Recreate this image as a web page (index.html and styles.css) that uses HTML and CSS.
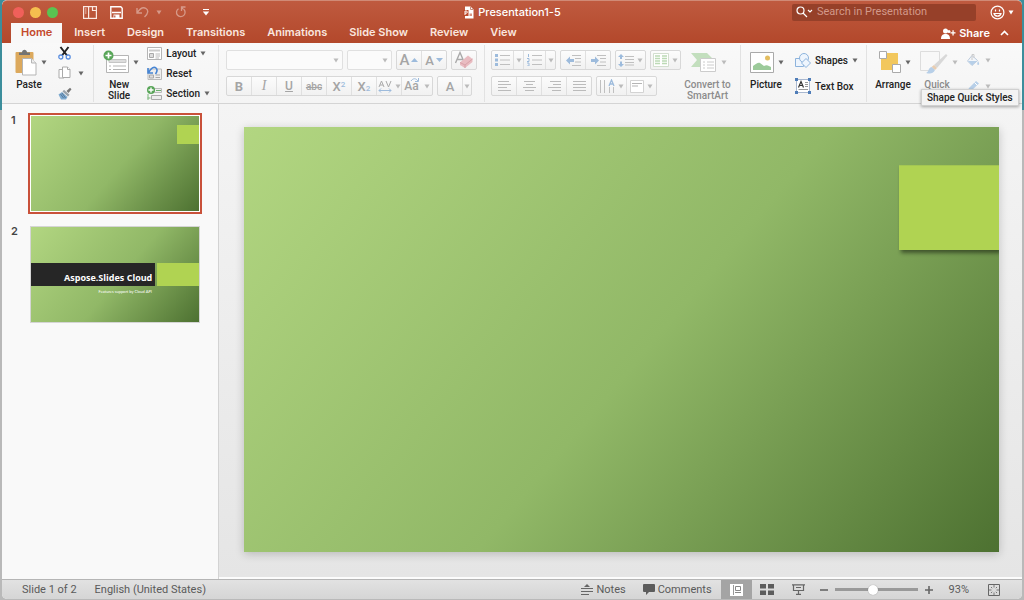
FILE: index.html
```html
<!DOCTYPE html>
<html lang="en">
<head>
<meta charset="utf-8">
<meta name="viewport" content="width=device-width, initial-scale=1">
<title>Presentation1-5</title>
<link rel="stylesheet" href="styles.css">
</head>
<body>
<svg class="defs" aria-hidden="true">
  <symbol id="caret" viewBox="0 0 6 5"><path d="M.5 .5h5L3 4.5z"/></symbol>
</svg>
<div class="window">
  <header class="header">
    <div class="titlebar">
      <div class="title-left">
        <div class="lights">
          <button class="light red" aria-label="Close"></button>
          <button class="light amber" aria-label="Minimise"></button>
          <button class="light green" aria-label="Zoom"></button>
        </div>
        <div class="quick">
          <button class="qbtn" aria-label="File gallery"><svg width="14" height="13" viewBox="0 0 14 13"><rect x=".6" y=".6" width="12.800" height="11.800" fill="none" stroke="#fbe9e3" stroke-width="1.200"/><path d="M2 3h1.500M2 5h1.500M2 7h1.500" stroke="#f0cfc5"/><path d="M5.600 1v11" stroke="#fbe9e3" stroke-width="1.200"/><path d="M9.500 1v3.500H13" fill="none" stroke="#fbe9e3" stroke-width="1.200"/></svg></button>
          <button class="qbtn" aria-label="Save"><svg width="13" height="13" viewBox="0 0 13 13"><path d="M.8.8h10l1.400 1.400v10H.8z" fill="none" stroke="#fff" stroke-width="1.400"/><path d="M2 6.500h9" stroke="#fff" stroke-width="1.400"/><path d="M3.500 8.500h6V12h-6z" fill="#fff"/><path d="M4.800 9.500v2" stroke="#b9503a" stroke-width="1.200"/></svg></button>
          <button class="qbtn wide faded" aria-label="Undo"><svg width="14" height="12" viewBox="0 0 14 12" fill="none" stroke="#fff" stroke-width="1.400"><path d="M1 2v5h5M1.300 6.700C4 2.500 7.500 1 10 2.500s2.500 5-1.500 8.500"/></svg><svg class="caret light-caret"><use href="#caret"/></svg></button>
          <button class="qbtn faded" aria-label="Repeat"><svg width="12" height="12" viewBox="0 0 12 12" fill="none" stroke="#fff" stroke-width="1.300"><path d="M10.500 1H6.500v4M6.500 1.500 8 3M8.500 3a4.300 4.300 0 1 1-5-.3"/></svg></button>
          <button class="qbtn" aria-label="Customise toolbar"><svg width="8" height="7" viewBox="0 0 8 7"><path d="M1 .5h6" stroke="#fff"/><path d="M.8 2.500h6.400L4 6.500z" fill="#fff"/></svg></button>
        </div>
      </div>
      <h1 class="doc-title"><svg width="11" height="13" viewBox="0 0 11 13"><path d="M2 .5h5.500l3 3v9H2z" fill="#fff"/><path d="M7.500.5v3h3" fill="none" stroke="#c9907f"/><path d="M0 4h5.500v6H0z" fill="#bd4a2d"/><path d="M2 9V5h1.200a1 1 0 0 1 0 2.200H2" fill="none" stroke="#fff"/><path d="M6.500 7.500h2.500v2.500h-2.500z" fill="#d89482"/></svg>Presentation1-5</h1>
      <div class="title-right">
        <label class="search"><svg width="17" height="12" viewBox="0 0 17 12" fill="none" stroke="#fff" stroke-width="1.200"><circle cx="4.500" cy="4.500" r="3.500"/><path d="m7 7 4 4M12 4l2 2 2-2"/></svg><input type="text" aria-label="Search in Presentation" placeholder="Search in Presentation"></label>
        <button class="smile" aria-label="Feedback"><svg width="15" height="15" viewBox="0 0 15 15" fill="none" stroke="#fff" stroke-width="1.200"><circle cx="7.500" cy="7.500" r="6.400"/><path d="M4 8.500c.8 3.500 6.200 3.500 7 0z"/><path d="M5.500 4.500v2M9.500 4.500v2"/></svg><svg class="caret light-caret"><use href="#caret"/></svg></button>
      </div>
    </div>
    <div class="tabbar">
      <nav class="tabs">
        <a class="tab active" href="#home">Home</a><a class="tab" href="#insert">Insert</a><a class="tab" href="#design">Design</a><a class="tab" href="#transitions">Transitions</a><a class="tab" href="#animations">Animations</a><a class="tab" href="#slideshow">Slide Show</a><a class="tab" href="#review">Review</a><a class="tab" href="#view">View</a>
      </nav>
      <button class="share"><svg width="15" height="11" viewBox="0 0 15 11" fill="#fff"><circle cx="4.500" cy="3" r="2.500"/><path d="M0 11c0-4 2-5 4.500-5s4.500 1 4.500 5z"/><circle cx="8" cy="3.500" r="1.500"/><path d="M9.500 4.200h5v1.300h-5z"/><path d="M11.400 2.200h1.300v5.200h-1.300z"/></svg>Share</button>
      <button class="collapse" aria-label="Collapse ribbon"><svg width="9" height="6" viewBox="0 0 9 6" fill="none" stroke="#fff" stroke-width="1.600"><path d="m1 5 3.500-3.500L8 5"/></svg></button>
    </div>
  </header>

  <section class="ribbon" aria-label="Home">
    <div class="group clipboard">
      <button class="big paste"><span class="big-icon"><svg width="22" height="27" viewBox="0 0 22 27"><rect x=".5" y="3" width="18" height="21" rx="1" fill="#dca95d"/><path d="M4 6V3.500h3C7-.3 12-.3 12 3.500h3V6z" fill="#747474"/><path d="M7.500 9.500h9l4.500 4.500v12H7.500z" fill="#fff" stroke="#b5b5b5"/><path d="M16.500 9.500V14H21" fill="#eee" stroke="#b5b5b5"/></svg><svg class="caret"><use href="#caret"/></svg></span>Paste</button>
      <div class="stack">
        <button class="small" aria-label="Cut"><svg width="13" height="14" viewBox="0 0 13 14" fill="none"><path d="M2.500 1 9 9.500M10.500 1 4 9.500" stroke="#222" stroke-width="2"/><circle cx="2.800" cy="11" r="2" stroke="#5b8fe0" stroke-width="1.300"/><circle cx="10.200" cy="11" r="2" stroke="#5b8fe0" stroke-width="1.300"/></svg></button>
        <button class="small copy" aria-label="Copy"><svg width="13" height="14" viewBox="0 0 13 14" fill="#fff" stroke="#aaa"><path d="M1 3.500h5v8.500H1z"/><path d="M4.500 1h5L12 3.500v8H4.500z"/><path d="M9.500 1v2.500H12"/></svg><svg class="caret"><use href="#caret"/></svg></button>
        <button class="small" aria-label="Format painter"><svg width="14" height="13" viewBox="0 0 14 13"><path d="M8.500 4 12 .8l1.500 1.400L10.500 6z" fill="#777"/><path d="m6 2.800 5.500 5L10 9.500 4.500 4.500z" fill="#9aa3ab"/><path d="m4 5 5.500 5L8 12.500H3L.5 7.500z" fill="#7eaad0"/><path d="m2.500 7 3 4M4 6l3.500 5" stroke="#55799b"/></svg></button>
      </div>
    </div>

    <div class="group slides">
      <button class="big newslide"><span class="big-icon"><svg width="26" height="24" viewBox="0 0 26 24"><path d="M3.500 5.500h22v17h-22z" fill="#fff" stroke="#b5b5b5"/><path d="M6 9.500h17v3H6z" fill="#ddd" stroke="#c5c5c5"/><path d="M6 16h2M10 16h13M6 19.500h2M10 19.500h13" stroke="#b5b5b5"/><circle cx="5.500" cy="5.500" r="5" fill="#58a558"/><path d="M2.500 5.500h6M5.500 2.500v6" stroke="#fff" stroke-width="1.700"/></svg><svg class="caret"><use href="#caret"/></svg></span>New<br>Slide</button>
      <div class="stack">
        <button class="small"><svg width="15" height="13" viewBox="0 0 15 13"><path d="M.5.5h14v12H.5z" fill="#fff" stroke="#b5b5b5"/><path d="M2 2.500h11v2H2z" fill="#ccc"/><path d="M2.500 6.500h4v4h-4z" fill="#ddd" stroke="#aaa"/><path d="M8.500 7H13M8.500 9H13M8.500 11H12" stroke="#bbb"/></svg>Layout<svg class="caret"><use href="#caret"/></svg></button>
        <button class="small"><svg width="15" height="14" viewBox="0 0 15 14"><path d="M1 3h13.500v10.500H1z" fill="#eee" stroke="#bbb"/><path d="M2.500 9h4v3h-4zM8.500 9H13M8.500 11.500H13" fill="#ddd" stroke="#aaa"/><path d="M1 2v5h5M1.500 6.500C4 2 7 0 9 2s1 4-.5 6" fill="none" stroke="#4685d4" stroke-width="1.600"/></svg>Reset</button>
        <button class="small"><svg width="15" height="14" viewBox="0 0 15 14"><path d="M7.500 2.500h7v4h-7z" fill="#eee" stroke="#bbb"/><path d="M4.500 9.500h10v4h-10z" fill="#eee" stroke="#aaa"/><path d="M9 4.500h5" stroke="#6bb16b"/><path d="M1 8v6M.5 12h3" stroke="#7ab87a"/><circle cx="4" cy="4" r="4" fill="#58a558"/><path d="M1.500 4h5M4 1.500v5" stroke="#fff" stroke-width="1.400"/></svg>Section<svg class="caret"><use href="#caret"/></svg></button>
      </div>
    </div>

    <div class="group rows font">
      <div class="row">
        <span class="combo family"><select aria-label="Font" disabled><option></option></select><svg class="caret dim"><use href="#caret"/></svg></span>
        <span class="combo size"><select aria-label="Font size" disabled><option></option></select><svg class="caret dim"><use href="#caret"/></svg></span>
        <span class="seg"><button disabled aria-label="Increase font size"><span class="glyph large">A</span><svg width="7" height="4" viewBox="0 0 7 4"><path d="M0 4h7L3.500 0z" fill="#9dbbdc"/></svg></button><button disabled aria-label="Decrease font size"><span class="glyph">A</span><svg width="7" height="4" viewBox="0 0 7 4"><path d="M0 0h7L3.500 4z" fill="#9dbbdc"/></svg></button></span>
        <span class="seg"><button disabled aria-label="Clear formatting"><svg width="20" height="18" viewBox="0 0 20 18"><path d="M1.500 12 6 1.500 10.500 12M3 8.500h6" fill="none" stroke="#aaa" stroke-width="1.400"/><path d="m6 11.500 8-7 4.500 3.500v3L11 17l-5-3z" fill="#e9bcc1"/><path d="m6 11.500 5 2.500 7.500-6M11 14v3" fill="none" stroke="#d9a2a8"/></svg></button></span>
      </div>
      <div class="row">
        <span class="seg"><button disabled class="b">B</button><button disabled class="i">I</button><button disabled class="u">U</button><button disabled class="s">abc</button><button disabled class="glyph">X<sup>2</sup></button><button disabled class="glyph">X<sub>2</sub></button><button disabled class="av" aria-label="Character spacing"><svg width="14" height="14" viewBox="0 0 14 14" fill="none"><path d="m1 8 2.500-6L6 8M2 6h3M8 2l2.500 6L13 2" stroke="#aaa"/><path d="M1 11.500h12M3 9.500l-2 2 2 2M11 9.500l2 2-2 2" stroke="#9dbbdc"/></svg><svg class="caret dim"><use href="#caret"/></svg></button><button disabled class="case">Aa<svg class="swoop" width="9" height="5" viewBox="0 0 9 5" fill="none" stroke="#9dbbdc"><path d="M1 3c2-3 5-3 7 0M8.500 0v3.500H5"/></svg><svg class="caret dim"><use href="#caret"/></svg></button></span>
        <span class="seg color"><button disabled class="glyph">A</button><button disabled aria-label="Font colour menu"><svg class="caret dim"><use href="#caret"/></svg></button></span>
      </div>
    </div>

    <div class="group rows para">
      <div class="row">
        <span class="seg split"><button disabled aria-label="Bullets"><svg width="15" height="12" viewBox="0 0 15 12"><path d="M5 1.500h10M5 6h10M5 10.500h10" stroke="#c0c0c0"/><path d="M0 0h3v3H0zM0 4.500h3v3H0zM0 9h3v3H0z" fill="#9dbbdc"/></svg></button><button disabled aria-label="Bullets menu"><svg class="caret dim"><use href="#caret"/></svg></button><button disabled aria-label="Numbering"><svg width="15" height="12" viewBox="0 0 15 12"><path d="M5 1.500h10M5 6h10M5 10.500h10" stroke="#c0c0c0"/><path d="M1.500 0v3M0 4.500h2v3H0M0 9h2v3H0" fill="none" stroke="#9dbbdc"/></svg></button><button disabled aria-label="Numbering menu"><svg class="caret dim"><use href="#caret"/></svg></button></span>
        <span class="seg"><button disabled aria-label="Decrease indent"><svg width="15" height="11" viewBox="0 0 15 11"><path d="M6 .5h9M9 3.500h6M9 7h6M6 10.500h9" stroke="#c0c0c0"/><path d="m0 5.500 4-4v2.500h4v3H4v2.500z" fill="#9dbbdc"/></svg></button><button disabled aria-label="Increase indent"><svg width="15" height="11" viewBox="0 0 15 11"><path d="M6 .5h9M9 3.500h6M9 7h6M6 10.500h9" stroke="#c0c0c0"/><path d="M8 5.500 4 1.500v2.500H0v3h4v2.500z" fill="#9dbbdc"/></svg></button></span>
        <span class="seg menu"><button disabled aria-label="Line spacing"><svg width="16" height="13" viewBox="0 0 16 13"><path d="M7 2.500h9M7 5.500h9M7 8.500h9M7 11h9" stroke="#c0c0c0"/><path d="M3 0l3 3H4v2H2V3H0zM3 13l3-3H4V7.500H2V10H0z" fill="#9dbbdc"/></svg><svg class="caret dim"><use href="#caret"/></svg></button></span>
        <span class="seg menu"><button disabled aria-label="Columns"><svg width="16" height="14" viewBox="0 0 16 14"><path d="M.5.5h15v13H.5z" fill="#fff" stroke="#d3dfcf"/><path d="M2 3h5M2 5.500h5M2 8h5M2 10.500h5M9 3h5M9 5.500h5M9 8h5M9 10.500h5" stroke="#bcdab5" stroke-width="1.500"/></svg><svg class="caret dim"><use href="#caret"/></svg></button></span>
      </div>
      <div class="row">
        <span class="seg"><button disabled aria-label="Align left"><svg width="13" height="10" viewBox="0 0 13 10" stroke="#bbb"><path d="M0 .5h11M0 3.500h13M0 6.500h9M0 9.500h13"/></svg></button><button disabled aria-label="Centre"><svg width="13" height="10" viewBox="0 0 13 10" stroke="#bbb"><path d="M1 .5h11M3 3.500h7M0 6.500h13M2 9.500h9"/></svg></button><button disabled aria-label="Align right"><svg width="13" height="10" viewBox="0 0 13 10" stroke="#bbb"><path d="M2 .5h11M5 3.500h8M0 6.500h13M4 9.500h9"/></svg></button><button disabled aria-label="Justify"><svg width="13" height="10" viewBox="0 0 13 10" stroke="#bbb"><path d="M0 .5h13M0 3.500h13M0 6.500h13M0 9.500h13"/></svg></button></span>
        <span class="seg menu"><button disabled aria-label="Text direction"><svg width="16" height="15" viewBox="0 0 16 15" fill="none"><path d="M1.500 1v13M5.500 1v13M10.500 8v6M14.500 8v6" stroke="#c0c0c0"/><path d="m10 7 2.500-6L15 7M11 5h3" stroke="#9dbbdc" stroke-width="1.300"/></svg><svg class="caret dim"><use href="#caret"/></svg></button><button disabled aria-label="Align text"><svg width="14" height="13" viewBox="0 0 14 13"><path d="M.5.5h13v12H.5z" fill="#fff" stroke="#d3d3d3"/><path d="M2 3.500h10M2 6h6" stroke="#b5b5b5"/></svg><svg class="caret dim"><use href="#caret"/></svg></button></span>
      </div>
    </div>

    <div class="group smart">
      <button class="big smartart" disabled><span class="big-icon"><svg width="26" height="20" viewBox="0 0 26 20"><path d="M0 1h16l7 7-7 7H0l6-7z" fill="#c3dfbe"/><path d="M9.500 6.500h15v13h-15z" fill="#fff" stroke="#ccc"/><path d="M12 10h2M16 10h7M12 13h2M16 13h7M12 16h2M16 16h7" stroke="#ccc"/></svg><svg class="caret dim"><use href="#caret"/></svg></span>Convert to<br>SmartArt</button>
    </div>

    <div class="group insert">
      <button class="big picture"><span class="big-icon"><svg width="24" height="21" viewBox="0 0 24 21"><path d="M.5.5h23v20H.5z" fill="#fff" stroke="#aaa"/><path d="M3 18v-4c3-2 5-4 7-3l4 3c3-2 5 0 7 1v3z" fill="#9cca9a"/><circle cx="17.500" cy="6" r="2.500" fill="#e3bd60"/></svg><svg class="caret"><use href="#caret"/></svg></span>Picture</button>
      <div class="stack two">
        <button class="small"><svg width="16" height="15" viewBox="0 0 16 15" fill="#eef5fd" stroke="#8db3dc"><path d="M.5 5.500h8v8h-8z"/><circle cx="9" cy="5" r="4.500"/><path d="m11 5.500 4.500 4.500-4.500 4.500L6.500 10z"/></svg>Shapes<svg class="caret"><use href="#caret"/></svg></button>
        <button class="small"><svg width="16" height="16" viewBox="0 0 16 16"><path d="M1.500 1.500h13v13h-13z" fill="#fff" stroke="#a9b8d0"/><path d="m3.500 9.500 2.500-6 2.500 6M4.500 7.500h3" fill="none" stroke="#333" stroke-width="1.200"/><path d="M10 4.500h3M10 6.500h3M10 8.500h3M3.500 11.500H13" stroke="#999"/><path d="M0 0h3v3H0zM13 0h3v3h-3zM0 13h3v3H0zM13 13h3v3h-3z" fill="#4f7db8"/></svg>Text Box</button>
      </div>
    </div>

    <div class="group arrange-group">
      <button class="big arrange"><span class="big-icon"><svg width="22" height="22" viewBox="0 0 22 22"><path d="M2 2h17v17H2z" fill="#f2c75c"/><path d="M.5.5h7v7h-7zM13.500 13.500h8v8h-8z" fill="#fff" stroke="#aaa"/></svg><svg class="caret"><use href="#caret"/></svg></span>Arrange</button>
      <button class="big styles" disabled><span class="big-icon"><svg width="28" height="25" viewBox="0 0 28 25"><path d="M.5 1.500h19v10l-8 9H.5z" fill="#f8f8f8" stroke="#ddd"/><path d="M26 4 14 15l3 3L27.500 5.500z" fill="#d8d8d8"/><path d="m14 15 3 3-2 2-3.500-3z" fill="#e8cdb2"/><path d="m11.500 17 3.500 3c-2 4-5 4-9 3 3-1 2-5 5.500-6z" fill="#b7cfe8"/></svg><svg class="caret dim"><use href="#caret"/></svg></span>Quick</button>
      <div class="stack two fx">
        <button class="small" disabled aria-label="Shape fill"><svg width="14" height="13" viewBox="0 0 14 13"><path d="m6 1.500 5.500 5L6 11.500 1.500 7z" fill="#f3f6fa" stroke="#bccbdd"/><path d="M2 7h9l-5 4.500zM12 7c2 3 1 4 0 4s-1-2 0-4" fill="#b7cfe8"/><path d="M6 6V.5h2V4" fill="none" stroke="#ccc"/></svg><svg class="caret dim"><use href="#caret"/></svg></button>
        <button class="small" disabled aria-label="Shape outline"><svg width="14" height="13" viewBox="0 0 14 13"><path d="M1 12 3 8l7-7 3 2.500-7.500 7z" fill="#b7cfe8"/><path d="m8.500 2.500 3 3" stroke="#fff"/></svg><svg class="caret dim"><use href="#caret"/></svg></button>
      </div>
      <div class="tooltip" role="tooltip">Shape Quick Styles</div>
    </div>
  </section>

  <main class="workspace">
    <aside class="thumbs" aria-label="Slides">
      <a class="thumb-row selected" href="#slide1"><span class="num">1</span><span class="frame"><span class="slide"><span class="accent"></span></span></span></a>
      <a class="thumb-row" href="#slide2"><span class="num">2</span><span class="frame"><span class="slide cover"><span class="band">Aspose.Slides Cloud</span><span class="accent"></span><span class="sub">Features support by Cloud API</span></span></span></a>
    </aside>
    <section class="stage" aria-label="Slide">
      <div class="slide main-slide"><span class="accent"></span></div>
    </section>
  </main>

  <footer class="status">
    <span>Slide 1 of 2</span>
    <span class="lang">English (United States)</span>
    <button class="notes"><svg width="12" height="11" viewBox="0 0 12 11"><path d="M0 4.500h12M0 7.500h12M0 10.500h8" stroke="#666"/><path d="M3 3h6L6 0z" fill="#666"/></svg>Notes</button>
    <button class="comments"><svg width="12" height="11" viewBox="0 0 12 11"><path d="M1 0h10q1 0 1 1v6q0 1-1 1H6l-3 3V8H1Q0 8 0 7V1q0-1 1-1z" fill="#5c5c5c"/></svg>Comments</button>
    <button class="view on" aria-label="Normal view"><svg width="13" height="12" viewBox="0 0 13 12"><path d="M0 0h13v12H0z" fill="#fff"/><path d="M3.500 1v10" stroke="#999"/><path d="M5.500 2.500h5v4h-5zM5 8.500h6" fill="none" stroke="#888"/></svg></button>
    <button class="view" aria-label="Slide sorter"><svg width="14" height="11" viewBox="0 0 14 11" fill="#5c5c5c"><path d="M0 0h6v4.500H0zM8 0h6v4.500H8zM0 6.500h6V11H0zM8 6.500h6V11H8z"/></svg></button>
    <button class="view" aria-label="Slide show"><svg width="13" height="11" viewBox="0 0 13 11" fill="none" stroke="#666" stroke-width="1.200"><path d="M0 .8h13M1.500 1v5.500h10V1M6.500 6.500V10M4 10.400h5M4 3.500h5"/></svg></button>
    <div class="zoom">
      <button aria-label="Zoom out"><svg width="8" height="8" viewBox="0 0 8 8"><path d="M0 4h8" stroke="#666" stroke-width="1.600"/></svg></button>
      <input type="range" min="0" max="100" value="46" aria-label="Zoom">
      <button aria-label="Zoom in"><svg width="8" height="8" viewBox="0 0 8 8"><path d="M0 4h8M4 0v8" stroke="#666" stroke-width="1.600"/></svg></button>
    </div>
    <span class="pct">93%</span>
    <button class="fit" aria-label="Fit slide"><svg width="12" height="12" viewBox="0 0 12 12" fill="none" stroke="#666"><path d="M.5.5h11v11H.5z"/><path d="M6 1v2.500M6 8.500V11M1 6h2.500M8.500 6H11M3 3l1.200 1.200M9 3 7.800 4.200M3 9l1.200-1.200M9 9 7.800 7.800" stroke="#777"/></svg></button>
  </footer>
</div>
</body>
</html>
```
FILE: styles.css
```css
* { box-sizing: border-box; }

body {
  margin: 0;
  height: 100vh;
  padding: 0 2px 1px;
  font: 11px/14px Inter, "Liberation Sans", sans-serif;
  color: #222;
  background: linear-gradient(#3c8e9c 110px, #b9b9b9 110px);
}

button {
  margin: 0;
  padding: 0;
  border: 0;
  background: none;
  font: inherit;
  color: inherit;
  display: flex;
  align-items: center;
  justify-content: center;
}

a { color: inherit; text-decoration: none; }
svg { display: block; flex: none; }
.defs { width: 0; height: 0; position: absolute; }

.caret { width: 6px; height: 5px; fill: #666; }
.caret.dim { fill: #bbb; }
.caret.light-caret { fill: #fff; }

.window { height: 100%; display: flex; flex-direction: column; border-radius: 5px; overflow: hidden; background: #f7f7f7; }

/* Title bar and tabs */
.header { flex: none; color: #fff; background: linear-gradient(#bf5a3f, #b3482b); border-top: 1px solid #d08a76; border-radius: 5px 5px 0 0; }
.titlebar { height: 22px; display: grid; grid-template-columns: 1fr auto 1fr; align-items: center; }
.title-left { display: flex; align-items: center; padding-left: 11px; gap: 25px; }
.lights { display: flex; gap: 6px; }
.light { width: 11px; height: 11px; border-radius: 50%; }
.red { background: #f0605a; }
.amber { background: #f5bf4f; }
.green { background: #5ac351; }
.quick { display: flex; align-items: center; gap: 13px; }
.qbtn { min-width: 12px; height: 16px; gap: 6px; }
.faded { opacity: .4; }
.doc-title { margin: 0; display: flex; align-items: center; gap: 4px; font-size: 11px; font-weight: 500; }
.title-right { display: flex; align-items: center; justify-content: flex-end; gap: 14px; padding-right: 8px; }
.search { width: 184px; height: 17px; display: flex; align-items: center; gap: 4px; padding: 0 4px; border-radius: 2px; background: #964029; }
.search input { flex: 1; min-width: 0; padding: 0; border: 0; outline: 0; background: none; color: #fff; font: 11px/14px Roboto, sans-serif; }
.search input::placeholder { color: #d3998a; opacity: 1; }
.smile { gap: 3px; }

.tabbar { height: 20px; display: flex; align-items: center; padding: 0 13px 0 9px; }
.tabs { flex: 1; height: 100%; display: flex; gap: 2px; }
.tab { padding: 2px 10px; font-weight: 600; color: #fae6df; white-space: nowrap; }
.tab.active { background: #f8f8f8; color: #c4492c; }
.share { gap: 3px; font-weight: 600; }
.collapse { margin-left: 10px; }

/* Ribbon */
.ribbon { flex: none; height: 61px; display: flex; padding: 2px 0 1px; background: linear-gradient(#f9f9f9, #f4f4f4); border-bottom: 1px solid #d4d4d4; font: 500 10px/11px Roboto, sans-serif; }
.group { flex: none; display: flex; padding: 0 8px; border-right: 1px solid #e2e2e2; position: relative; }
.group:last-child { border-right: 0; }
.big { flex-direction: column; justify-content: flex-start; }
.big-icon { position: relative; height: 34px; display: flex; align-items: center; margin-right: 7px; }
.big-icon .caret { position: absolute; left: 100%; margin-left: 4px; top: 15px; }
.big:disabled { color: #8b8b8b; }
.stack { display: flex; flex-direction: column; justify-content: space-between; padding-bottom: 1px; }
.small { height: 16px; gap: 4px; justify-content: flex-start; white-space: nowrap; }
.stack.two { padding: 7px 0 8px; }

.clipboard { width: 92px; }
.paste { width: 38px; }
.clipboard .stack { margin-left: 10px; }
.copy { gap: 7px; }
.slides { width: 125px; }
.newslide { width: 36px; }
.slides .stack { margin-left: 11px; }

.rows { flex-direction: column; gap: 6px; padding: 5px 7px 0; }
.row { display: flex; gap: 4px; }
.combo { position: relative; height: 20px; }
.combo select { width: 100%; height: 100%; display: block; appearance: none; border: 1px solid #e0e0e0; border-radius: 2px; background: #fbfbfb; opacity: 1; }
.combo .caret { position: absolute; right: 4px; top: 8px; }
.family { width: 117px; }
.size { width: 45px; }
.seg { height: 20px; display: flex; border: 1px solid #d8d8d8; border-radius: 2px; background: linear-gradient(#fcfcfc, #f1f1f1); }
.seg button { width: 24px; border-right: 1px solid #e0e0e0; box-sizing: content-box; color: #a5a5a5; gap: 2px; }
.seg button:last-child { border-right: 0; }
.glyph { font-size: 13px; }
.glyph.large { font-size: 15px; }
.seg .b { font-size: 13px; font-weight: 700; }
.seg .i { font: italic 14px "Liberation Serif", serif; }
.seg .u { font-size: 12px; text-decoration: underline; }
.seg .s { text-decoration: line-through; }
.seg sup, .seg sub { font-size: 8px; line-height: 8px; color: #9dbbdc; }
.seg sup { align-self: flex-start; margin-top: 4px; }
.seg sub { align-self: flex-end; margin-bottom: 2px; }
.seg .glyph { gap: 0; }
.seg .av { width: 24px; gap: 3px; }
.seg .case { width: 30px; gap: 5px; font-size: 12px; position: relative; }
.swoop { position: absolute; left: 8px; top: 1px; }
.seg.color button:last-child { width: 8px; }
.font .row:last-child .seg button { flex: none; }
.font { width: 266px; }

.para { width: 198px; border-right: 0; padding-left: 6px; }
.split button:nth-child(odd) { width: 21px; }
.split button:nth-child(even) { width: 9px; }
.seg.menu button { width: 29px; gap: 3px; }
.smart { padding: 0 8px 0 0; width: 58px; }
.smartart { width: 54px; white-space: nowrap; }
.insert { width: 126px; }
.picture { width: 36px; }
.insert .stack { margin-left: 12px; }
.arrange { width: 36px; }
.styles { width: 38px; margin-left: 7px; }
.fx { margin-left: 10px; }
.fx .small { gap: 5px; }
.tooltip { position: absolute; left: 54px; top: 44px; z-index: 2; padding: 1px 5px; border: 1px solid #d0d0d0; background: #f3f3f3; color: #222; font-size: 10px; line-height: 13px; white-space: nowrap; box-shadow: 0 1px 3px #0005; }

/* Slides */
.workspace { flex: 1; min-height: 0; display: flex; }
.thumbs { flex: none; width: 217px; padding: 9px 0 0 9px; border-right: 1px solid #d3d3d3; background: #f9f9f9; display: flex; flex-direction: column; gap: 10px; }
.thumb-row { display: flex; gap: 9px; }
.num { width: 8px; font-weight: 600; color: #444; }
.frame { width: 174px; padding: 2px; }
.frame .slide { border: 1px solid #d5d5d5; aspect-ratio: 170 / 97; }
.selected .frame { background: #c9513a; }
.selected .frame .slide { border-color: #fff; }
.slide { position: relative; display: block; aspect-ratio: 16 / 9; background: linear-gradient(130deg, #b2d681, #91b867 53%, #4d7131); }
.accent { position: absolute; right: 0; top: 9%; width: 13.2%; height: 20%; background: #b0d352; }
.band { position: absolute; left: 0; top: 38%; width: 74%; height: 24%; padding: 8px 3px 0; background: #262626; color: #fff; font: 700 9px/13px "Open Sans", sans-serif; text-align: right; white-space: nowrap; }
.cover .accent { top: 38%; width: 25%; height: 24%; }
.sub { position: absolute; right: 28%; top: 65%; color: #fff; font: 4px/5px Lato, sans-serif; white-space: nowrap; }

.stage { flex: 1; min-width: 0; padding: 23px 23px 0 25px; background: linear-gradient(#f4f4f4, #e5e5e5); border-bottom: 2px solid #fcfcfc; }
.main-slide { box-shadow: 0 2px 9px #0003; }
.main-slide .accent { clip-path: inset(0 0 -8px -2px); box-shadow: 2px 3px 4px #0007; }

/* Status bar */
.status { flex: none; height: 20px; display: flex; align-items: center; padding: 0 22px 0 20px; border-top: 1px solid #b5b5b5; background: linear-gradient(#e2e2e2, #d5d5d5); color: #5a5a5a; white-space: nowrap; font: 11px/14px Roboto, sans-serif; }
.lang { margin-left: 18px; }
.notes { margin-left: auto; gap: 3px; }
.comments { margin-left: 17px; gap: 3px; margin-right: 9px; }
.view { width: 31px; height: 100%; }
.view.on { background: #a4a4a4; }
.zoom { display: flex; align-items: center; gap: 7px; margin-left: 6px; }
.zoom input { appearance: none; width: 83px; height: 10px; margin: 0; background: linear-gradient(#999, #999) center / 100% 3px no-repeat; }
.zoom input::-webkit-slider-thumb { appearance: none; width: 10px; height: 10px; border-radius: 50%; background: #fff; box-shadow: 0 0 1px #0006; }
.pct { margin-left: 16px; }
.fit { margin-left: 19px; }
```
